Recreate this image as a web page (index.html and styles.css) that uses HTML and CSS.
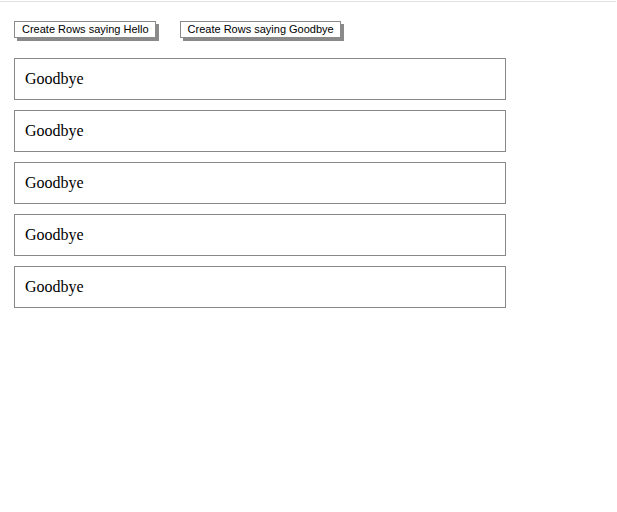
FILE: index.html
```html
<!DOCTYPE html>
<html>
<head>
<meta charset="utf-8">
<link rel="stylesheet" href="styles.css">
</head>
<body>
<div class="topline"></div>
<div class="app">
  <div class="controls">
    <button class="btn">Create Rows saying Hello</button>
    <button class="btn">Create Rows saying Goodbye</button>
  </div>
  <div class="rows">
    <div class="row">Goodbye</div>
    <div class="row">Goodbye</div>
    <div class="row">Goodbye</div>
    <div class="row">Goodbye</div>
    <div class="row">Goodbye</div>
  </div>
</div>
</body>
</html>
```
FILE: styles.css
```css
html, body {
  margin: 0;
  padding: 0;
  background: #fff;
}
body {
  font-family: "Liberation Serif", "Times New Roman", serif;
}
.topline {
  margin-top: 1px;
  width: 616px;
  border-top: 1px solid #e0e0e0;
}
.app {
  padding: 18px 14px 0 14px;
}
.controls {
  display: flex;
  align-items: flex-start;
  gap: 24px;
  height: 20px;
  padding-top: 1px;
}
.btn {
  font-family: "Liberation Sans", Arial, sans-serif;
  font-size: 11px;
  color: #000;
  background: #fff;
  border: 1px solid #8a8a8a;
  box-shadow: 3px 3px 0 #8a8a8a;
  padding: 0 6px 0 7px;
  height: 17px;
  line-height: 15px;
  margin: 0;
}
.rows {
  margin-top: 17px;
  display: flex;
  flex-direction: column;
  gap: 10px;
  width: 492px;
}
.row {
  box-sizing: border-box;
  height: 42px;
  border: 1px solid #888;
  padding: 0 10px;
  font-size: 16px;
  line-height: 40px;
  color: #000;
}
```
